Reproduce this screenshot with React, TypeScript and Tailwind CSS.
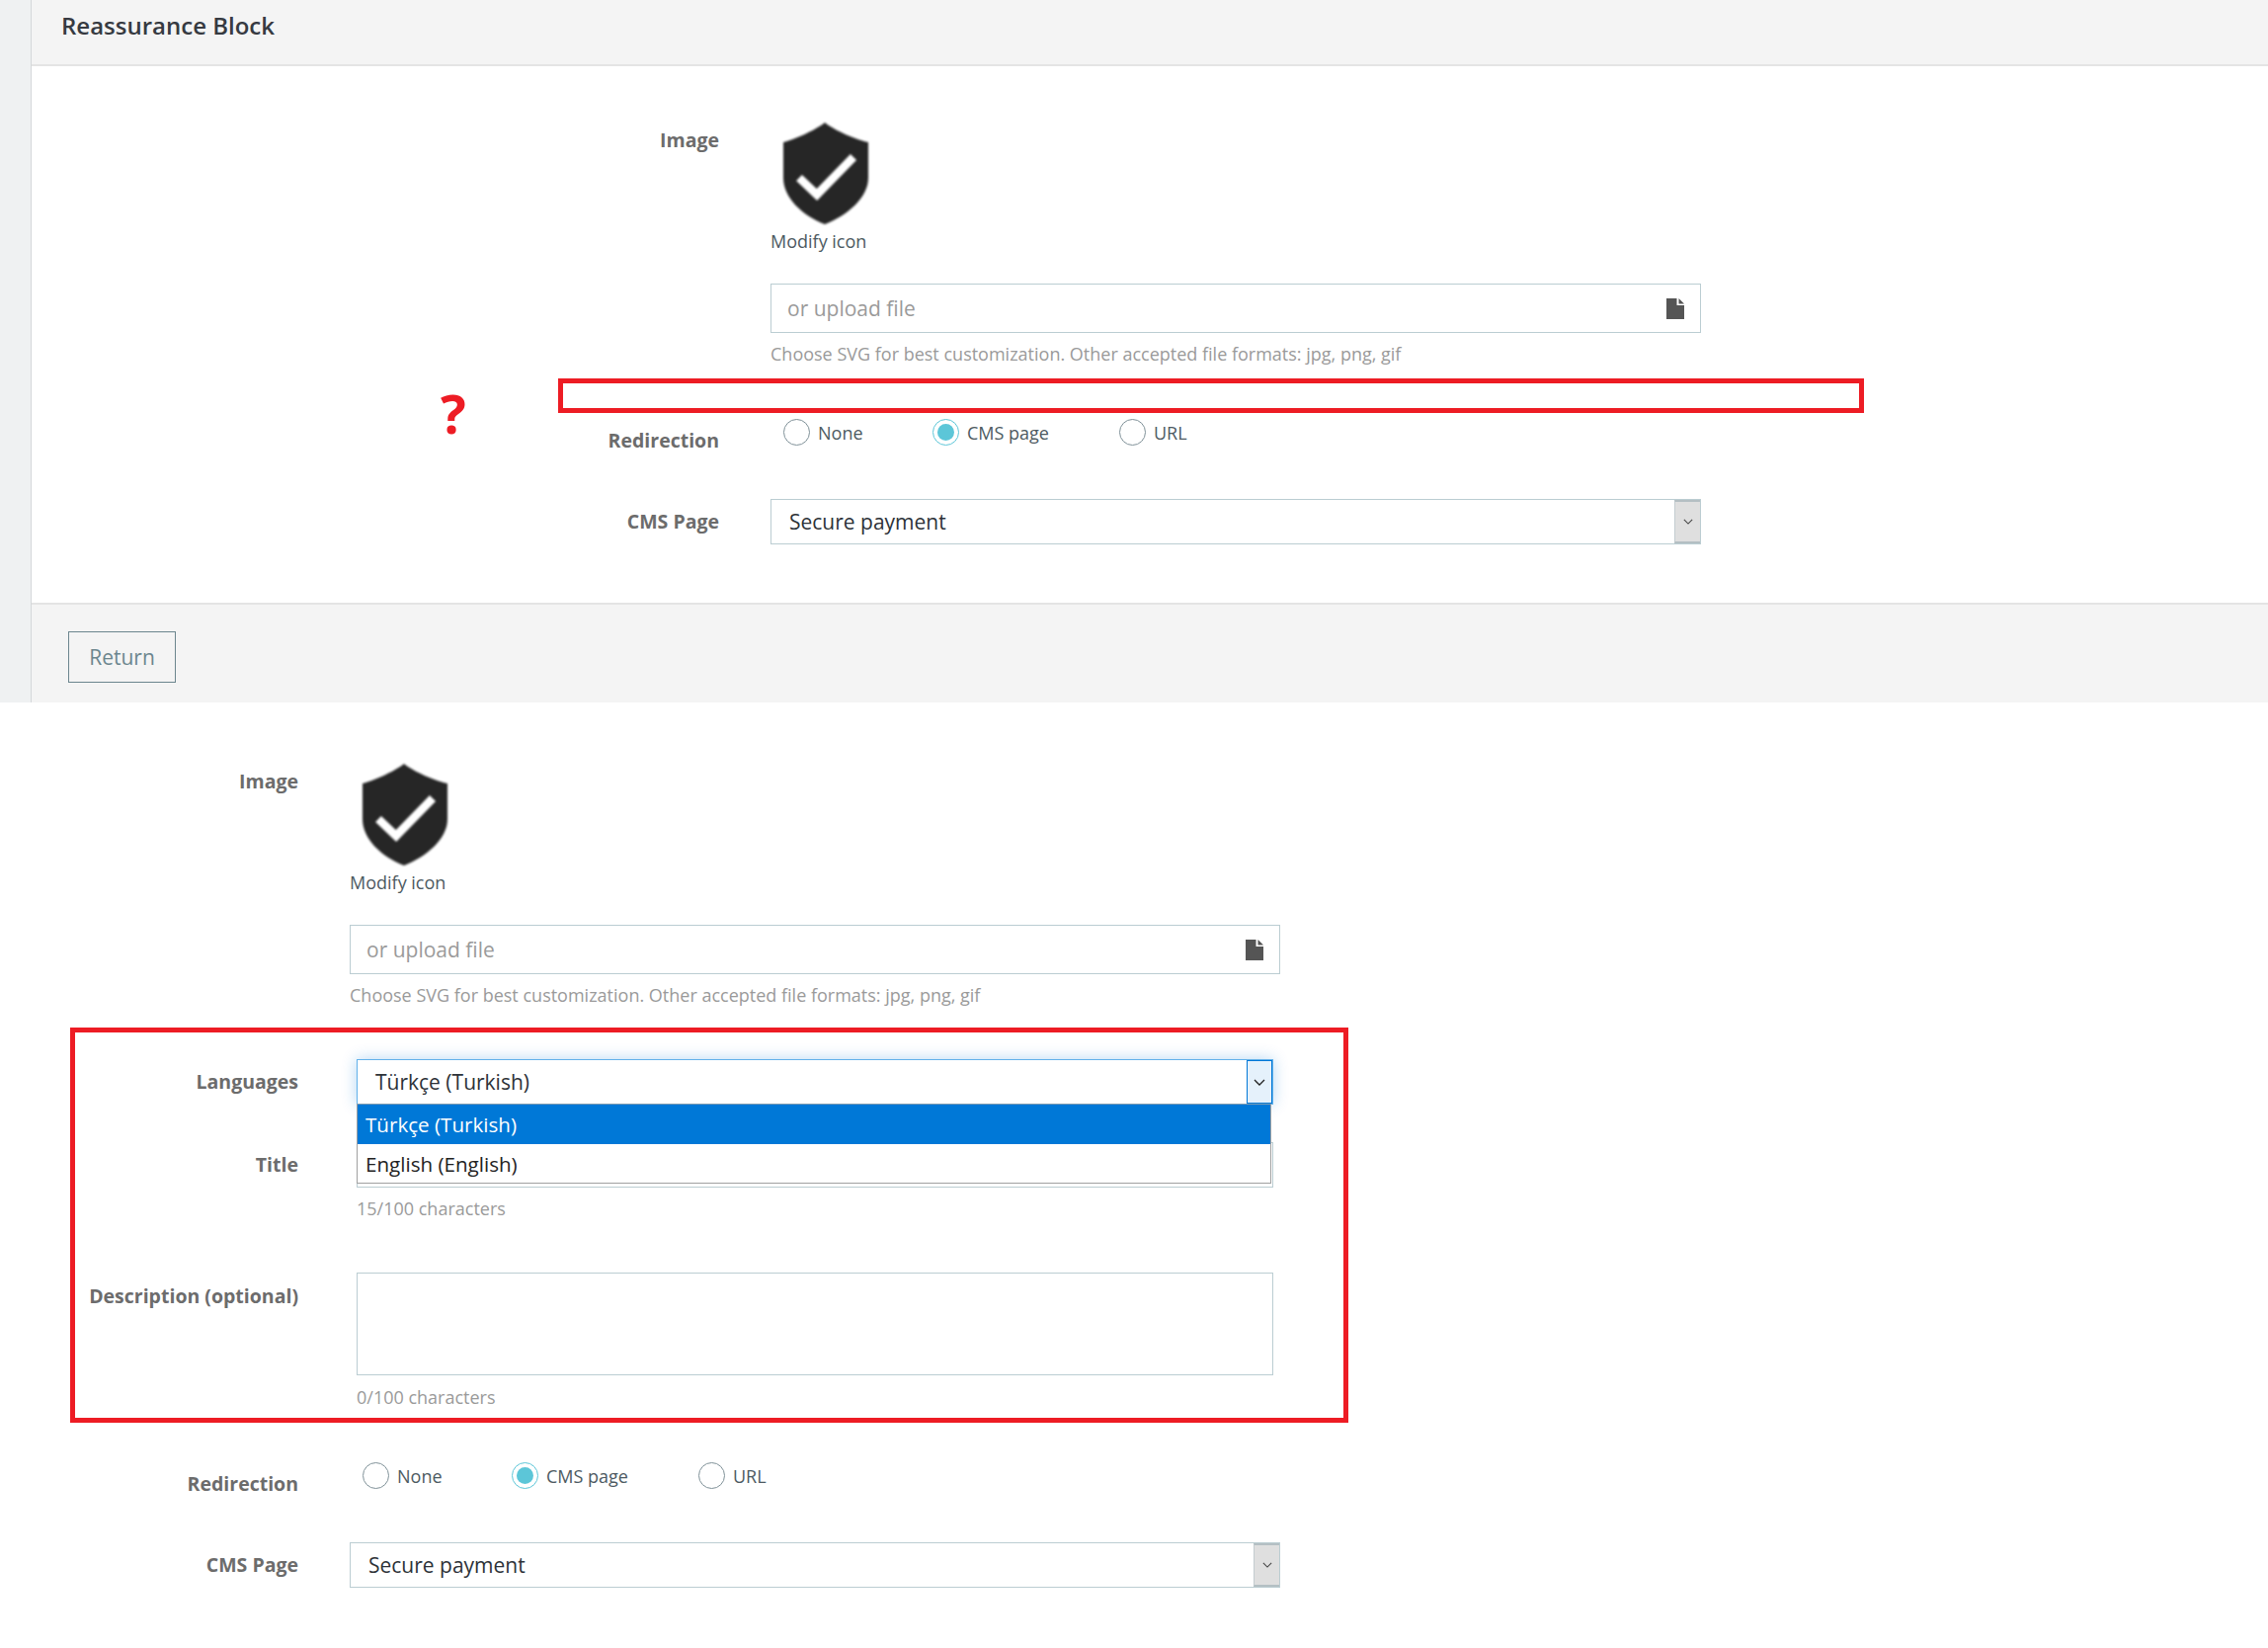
import React from "react";

const font = { fontFamily: '"Open Sans", "Liberation Sans", sans-serif' };

function Shield() {
  return (
    <svg viewBox="0 0 88 106" className="ml-[12px] block h-[106px] w-[88px] blur-[1.2px]">
      <path
        d="M43 2 C50 8 70 18 87 22 L87 58 C87 78 66 96 43 105 C20 96 1 78 1 58 L1 22 C16 18 36 8 43 2 Z"
        fill="#262626"
      />
      <path d="M17 58 L35 75 L72 37" fill="none" stroke="#ffffff" strokeWidth="8.5" />
    </svg>
  );
}

function FileIcon() {
  return (
    <svg viewBox="0 0 18 21" className="h-[21px] w-[18px]" fill="#555555">
      <path d="M0 0 H10.5 V7 H18 V21 H0 Z" />
      <path d="M12.5 0 L18 5.5 H12.5 Z" />
    </svg>
  );
}

function Chevron({ className }: { className: string }) {
  return (
    <svg viewBox="0 0 12 7" className={className} fill="none" stroke="currentColor" strokeWidth="1.3">
      <path d="M1 1 L6 6 L11 1" />
    </svg>
  );
}

function Label({ children, className }: { children: React.ReactNode; className: string }) {
  return (
    <div className={"shrink-0 text-right text-[19.5px] leading-[24px] font-bold text-[#6c6c6c] " + className}>
      {children}
    </div>
  );
}

function Help({ children, className }: { children: React.ReactNode; className: string }) {
  return <div className={"text-[18px] leading-[22px] text-[#9a9a9a] " + className}>{children}</div>;
}

function ImageFields({ labelWidth }: { labelWidth: string }) {
  return (
    <div className="flex gap-[52px]">
      <Label className={labelWidth + " pt-[8px]"}>Image</Label>
      <div className="w-[942px]">
        <Shield />
        <div className="mt-[5px] text-[18px] leading-[22px] text-[#4d5a62]">Modify icon</div>
        <div className="mt-[32px] flex h-[50px] items-center justify-between border border-[#bbcdd2] pr-[16px] pl-[16px]">
          <span className="pt-px text-[21px] text-[#9a9a9a]">or upload file</span>
          <FileIcon />
        </div>
        <Help className="mt-[10px]">Choose SVG for best customization. Other accepted file formats: jpg, png, gif</Help>
      </div>
    </div>
  );
}

function Radio({ label, checked, className }: { label: string; checked?: boolean; className: string }) {
  return (
    <div className={"flex items-center gap-[8px] " + className}>
      <span
        className={
          "flex h-[27px] w-[27px] items-center justify-center rounded-full border " +
          (checked ? "border-[#5cc6d8]" : "border-[#7f9198]")
        }
      >
        {checked ? <span className="h-[17px] w-[17px] rounded-full bg-[#5cc6d8]" /> : null}
      </span>
      <span className="pt-px text-[18px] leading-[27px] text-[#4d5a62]">{label}</span>
    </div>
  );
}

function RedirectFields({ labelWidth }: { labelWidth: string }) {
  return (
    <>
      <div className="mt-[55px] flex h-[27px] gap-[52px]">
        <Label className={labelWidth + " h-[34px] pt-[10px]"}>Redirection</Label>
        <div className="flex pl-[13px]">
          <Radio label="None" className="w-[151px]" />
          <Radio label="CMS page" className="w-[189px]" checked />
          <Radio label="URL" className="w-[100px]" />
        </div>
      </div>
      <div className="mt-[54px] flex items-center gap-[52px]">
        <Label className={labelWidth}>CMS Page</Label>
        <div className="flex h-[46px] w-[942px] items-center justify-between border border-[#bbcdd2] pl-[18px]">
          <span className="pt-px text-[21px] text-[#2d3238]">Secure payment</span>
          <span className="flex h-[44px] w-[26px] items-center justify-center border-y-2 border-l border-y-[#b4bfc3] border-l-[#c4cdd0] bg-[#dfdfdf] text-[#444444]">
            <Chevron className="h-[6px] w-[10px]" />
          </span>
        </div>
      </div>
    </>
  );
}

export default function App() {
  return (
    <div className="relative min-h-[1668px] w-[2296px] overflow-hidden bg-white" style={font}>
      <div className="flex">
        <div className="w-[32px] shrink-0 border-r border-[#d5d8da] bg-[#eff1f2]" />
        <div className="min-w-0 flex-1">
          <div className="h-[67px] border-b-2 border-[#e4e4e4] bg-[#f4f4f4] pt-[9px] pl-[30px] text-[24px] leading-[34px] font-semibold text-[#363a41]">
            Reassurance Block
          </div>
          <div className="pt-[55px]">
            <ImageFields labelWidth="w-[696px]" />
            <RedirectFields labelWidth="w-[696px]" />
          </div>
          <div className="mt-[59px] h-[101px] border-t-2 border-[#e4e4e4] bg-[#f4f4f4] pt-[27px] pl-[37px]">
            <button className="flex h-[52px] w-[109px] items-center justify-center border border-[#6c868e] pt-px text-[21px] text-[#6c868e]">
              Return
            </button>
          </div>
        </div>
      </div>

      <div className="pt-[60px]">
        <ImageFields labelWidth="w-[302px]" />

        <div className="mt-[54px] flex items-center gap-[52px]">
          <Label className="w-[302px]">Languages</Label>
          <div className="relative ml-[7px] flex h-[46px] w-[928px] items-center justify-between border border-[#62b1ea] pl-[18px] shadow-[0_0_14px_rgba(0,120,215,0.3)]">
            <span className="pt-px text-[21px] text-[#2d3238]">Türkçe (Turkish)</span>
            <span className="flex h-[44px] w-[26px] items-center justify-center border border-[#0078d7] bg-[#e5f1fb] text-[#222222]">
              <Chevron className="h-[7px] w-[12px]" />
            </span>
            <div className="absolute top-[44px] -left-px z-10 w-[926px] border border-[#a0a0a0] border-t-[#7d9cb3] bg-white text-[20.6px] leading-[41px]">
              <div className="h-[40px] bg-[#0078d7] pl-[8px] text-white">Türkçe (Turkish)</div>
              <div className="h-[39px] pl-[8px] text-[#222222]">English (English)</div>
            </div>
          </div>
        </div>

        <div className="mt-[38px] flex items-center gap-[52px]">
          <Label className="w-[302px]">Title</Label>
          <div className="ml-[7px] h-[46px] w-[928px] border border-[#bbcdd2]" />
        </div>
        <Help className="mt-[10px] ml-[361px]">15/100 characters</Help>

        <div className="mt-[54px] flex gap-[52px]">
          <Label className="w-[302px] pt-[12px]">Description (optional)</Label>
          <div className="ml-[7px] h-[104px] w-[928px] border border-[#bbcdd2]" />
        </div>
        <Help className="mt-[11px] ml-[361px]">0/100 characters</Help>

        <RedirectFields labelWidth="w-[302px]" />
      </div>

      <div className="absolute top-[383px] left-[565px] h-[35px] w-[1322px] border-[5px] border-[#ed1c24]" />
      <div className="absolute top-[390px] left-[446px] text-[54px] leading-[56px] font-bold text-[#ed1c24]">?</div>
      <div className="absolute top-[1040px] left-[71px] h-[400px] w-[1294px] border-[5px] border-[#ed1c24]" />
    </div>
  );
}
